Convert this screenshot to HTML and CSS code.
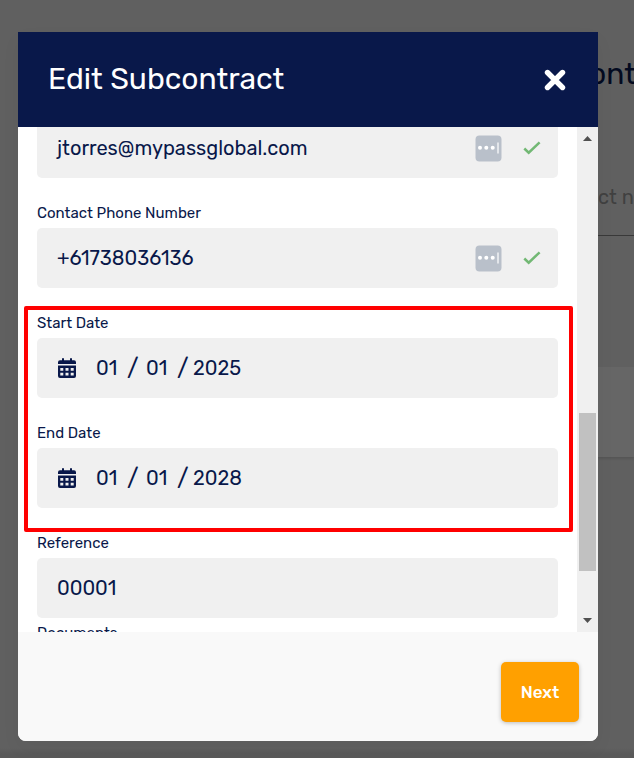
FILE: index.html
```html
<!DOCTYPE html>
<html lang="en">
<head>
<meta charset="utf-8">
<title>Edit Subcontract</title>
<link rel="stylesheet" href="styles.css">
</head>
<body>
<svg class="defs" aria-hidden="true">
  <symbol id="calendar" viewBox="0 0 18 20">
    <path d="M0 7.500h18v10.500a2 2 0 0 1-2 2H2a2 2 0 0 1-2-2zM0 6V4.300q0-2 2-2h2V1q0-1 1-1t1 1v1.300h6V1q0-1 1-1t1 1v1.300h2q2 0 2 2V6z"/>
    <path class="cells" d="M2.300 10h3v2.700h-3zM7.500 10h3v2.700h-3zM12.700 10h3v2.700h-3zM2.300 14.800h3v2.700h-3zM7.500 14.800h3v2.700h-3zM12.700 14.800h3v2.700h-3z"/>
  </symbol>
  <symbol id="autofill" viewBox="0 0 27 27">
    <rect x=".5" y=".5" width="26" height="26" rx="4" fill="#b9c0ca"/>
    <circle cx="5" cy="12.800" r="2" fill="#fff"/><circle cx="11.300" cy="12.800" r="2" fill="#fff"/><circle cx="17.700" cy="12.800" r="2" fill="#fff"/>
    <path d="M23 7.500v11" stroke="#fff" stroke-width="1.200"/>
  </symbol>
  <symbol id="check" viewBox="0 0 18 14">
    <path d="M1.300 7.500l4.400 4.200L16.600 1.300" fill="none" stroke="#72b874" stroke-width="2.500"/>
  </symbol>
</svg>
<div class="page">
  <div class="page-title">ont</div>
  <div class="page-input">ct n</div>
  <div class="page-panel"></div>
</div>
<div class="dialog">
  <header class="header">
    <h1>Edit Subcontract</h1>
    <svg class="close" viewBox="0 0 22 22"><path d="M3.500 3.500l15 15M18.500 3.500l-15 15" stroke="#fff" stroke-width="5.400" stroke-linecap="round"/></svg>
  </header>
  <div class="body">
    <main class="form">
      <div class="input first"><span class="value">jtorres@mypassglobal.com</span><svg class="autofill"><use href="#autofill"/></svg><svg class="check"><use href="#check"/></svg></div>
      <div class="label">Contact Phone Number</div>
      <div class="input"><span class="value">+61738036136</span><svg class="autofill"><use href="#autofill"/></svg><svg class="check"><use href="#check"/></svg></div>
      <div class="label">Start Date</div>
      <div class="input"><svg class="calendar"><use href="#calendar"/></svg><span class="day">01</span><span class="slash">/</span><span class="month">01</span><span class="slash">/</span><span class="year">2025</span></div>
      <div class="label">End Date</div>
      <div class="input"><svg class="calendar"><use href="#calendar"/></svg><span class="day">01</span><span class="slash">/</span><span class="month">01</span><span class="slash">/</span><span class="year">2028</span></div>
      <div class="label">Reference</div>
      <div class="input"><span class="value">00001</span></div>
      <div class="label documents">Documents</div>
    </main>
    <div class="scrollbar">
      <svg viewBox="0 0 9 5"><path d="M0 5L4.500 0L9 5z"/></svg>
      <div class="thumb"></div>
      <svg viewBox="0 0 9 5"><path d="M0 0h9L4.500 5z"/></svg>
    </div>
  </div>
  <footer class="footer"><button>Next</button></footer>
  <div class="highlight"></div>
</div>
</body>
</html>
```
FILE: styles.css
```css
* { box-sizing: border-box; }
body {
  margin: 0;
  height: 758px;
  overflow: hidden;
  background: #606060;
  color: #09184a;
  font-family: Rubik, Roboto, sans-serif;
}
.defs { position: absolute; width: 0; height: 0; }
.page {
  height: 758px;
  padding-top: 54px;
  padding-left: 589px;
  background: linear-gradient(#606060 748px, #595959 754px);
}
.page-title {
  height: 40px;
  color: #030a20;
  font-size: 30px;
  line-height: 40px;
}
.page-input {
  height: 142px;
  padding: 87px 0 0 9px;
  border-bottom: 1px solid #393939;
  color: #404040;
  font-size: 20px;
  line-height: 32px;
  white-space: nowrap;
}
.page-panel {
  height: 90px;
  margin-top: 131px;
  background: #666;
  box-shadow: 0 1px 3px #505050;
  clip-path: inset(0 0 -4px 0);
}
.dialog {
  position: absolute;
  top: 32px;
  left: 18px;
  display: flex;
  flex-direction: column;
  width: 580px;
  height: 709px;
  border-radius: 0 0 8px 8px;
  background: #fff;
  box-shadow: 0 8px 20px rgba(0, 0, 0, .04);
}
.header {
  display: flex;
  align-items: center;
  justify-content: space-between;
  height: 95px;
  padding: 0 32px 0 30px;
  background: #09184a;
  color: #fff;
}
h1 {
  margin: 0 0 2px;
  font-size: 30px;
  font-weight: 400;
  line-height: 40px;
}
.close { width: 22px; height: 22px; }
.body {
  display: flex;
  height: 505px;
  overflow: hidden;
}
.form { width: 559px; padding: 0 19px; }
.input {
  display: flex;
  align-items: center;
  height: 60px;
  padding: 0 17px 0 20px;
  border-radius: 5px;
  background: #f0f0f0;
  font-size: 20px;
  line-height: 30px;
}
.first { margin-top: -9px; }
.value { flex: 1; }
.label {
  margin: 25px 0 5px;
  font-size: 15px;
  line-height: 20px;
}
.documents { margin-top: 5px; }
.autofill { width: 27px; height: 27px; margin-right: 21px; }
.check { width: 18px; height: 14px; }
.calendar {
  width: 18px;
  height: 20px;
  margin: 0 20px 0 1px;
  fill: #09184a;
}
.cells { fill: #f0f0f0; }
.day, .month { width: 31px; }
.slash { width: 19px; font-size: 24px; }
.year { margin-left: -3px; }
.scrollbar {
  display: flex;
  flex-direction: column;
  align-items: center;
  width: 21px;
  padding-top: 9px;
  background: #f0f0f0;
}
.scrollbar svg { width: 9px; height: 5px; fill: #505050; }
.thumb {
  width: 17px;
  height: 158px;
  margin: 272px 0 47px;
  background: #c1c1c1;
}
.footer {
  display: flex;
  justify-content: flex-end;
  height: 109px;
  padding: 30px 19px 0;
  border-radius: 0 0 8px 8px;
  background: #f9f9f9;
}
button {
  width: 78px;
  height: 60px;
  padding: 0;
  border: 0;
  border-radius: 5px;
  background: #ffa000;
  box-shadow: 0 1px 4px rgba(0, 0, 0, .25);
  color: #fff;
  font: 500 17px/30px Rubik, Roboto, sans-serif;
}
.highlight {
  position: absolute;
  top: 274px;
  left: 6px;
  width: 549px;
  height: 226px;
  border: 4px solid #f00;
  border-radius: 2px;
}
```
